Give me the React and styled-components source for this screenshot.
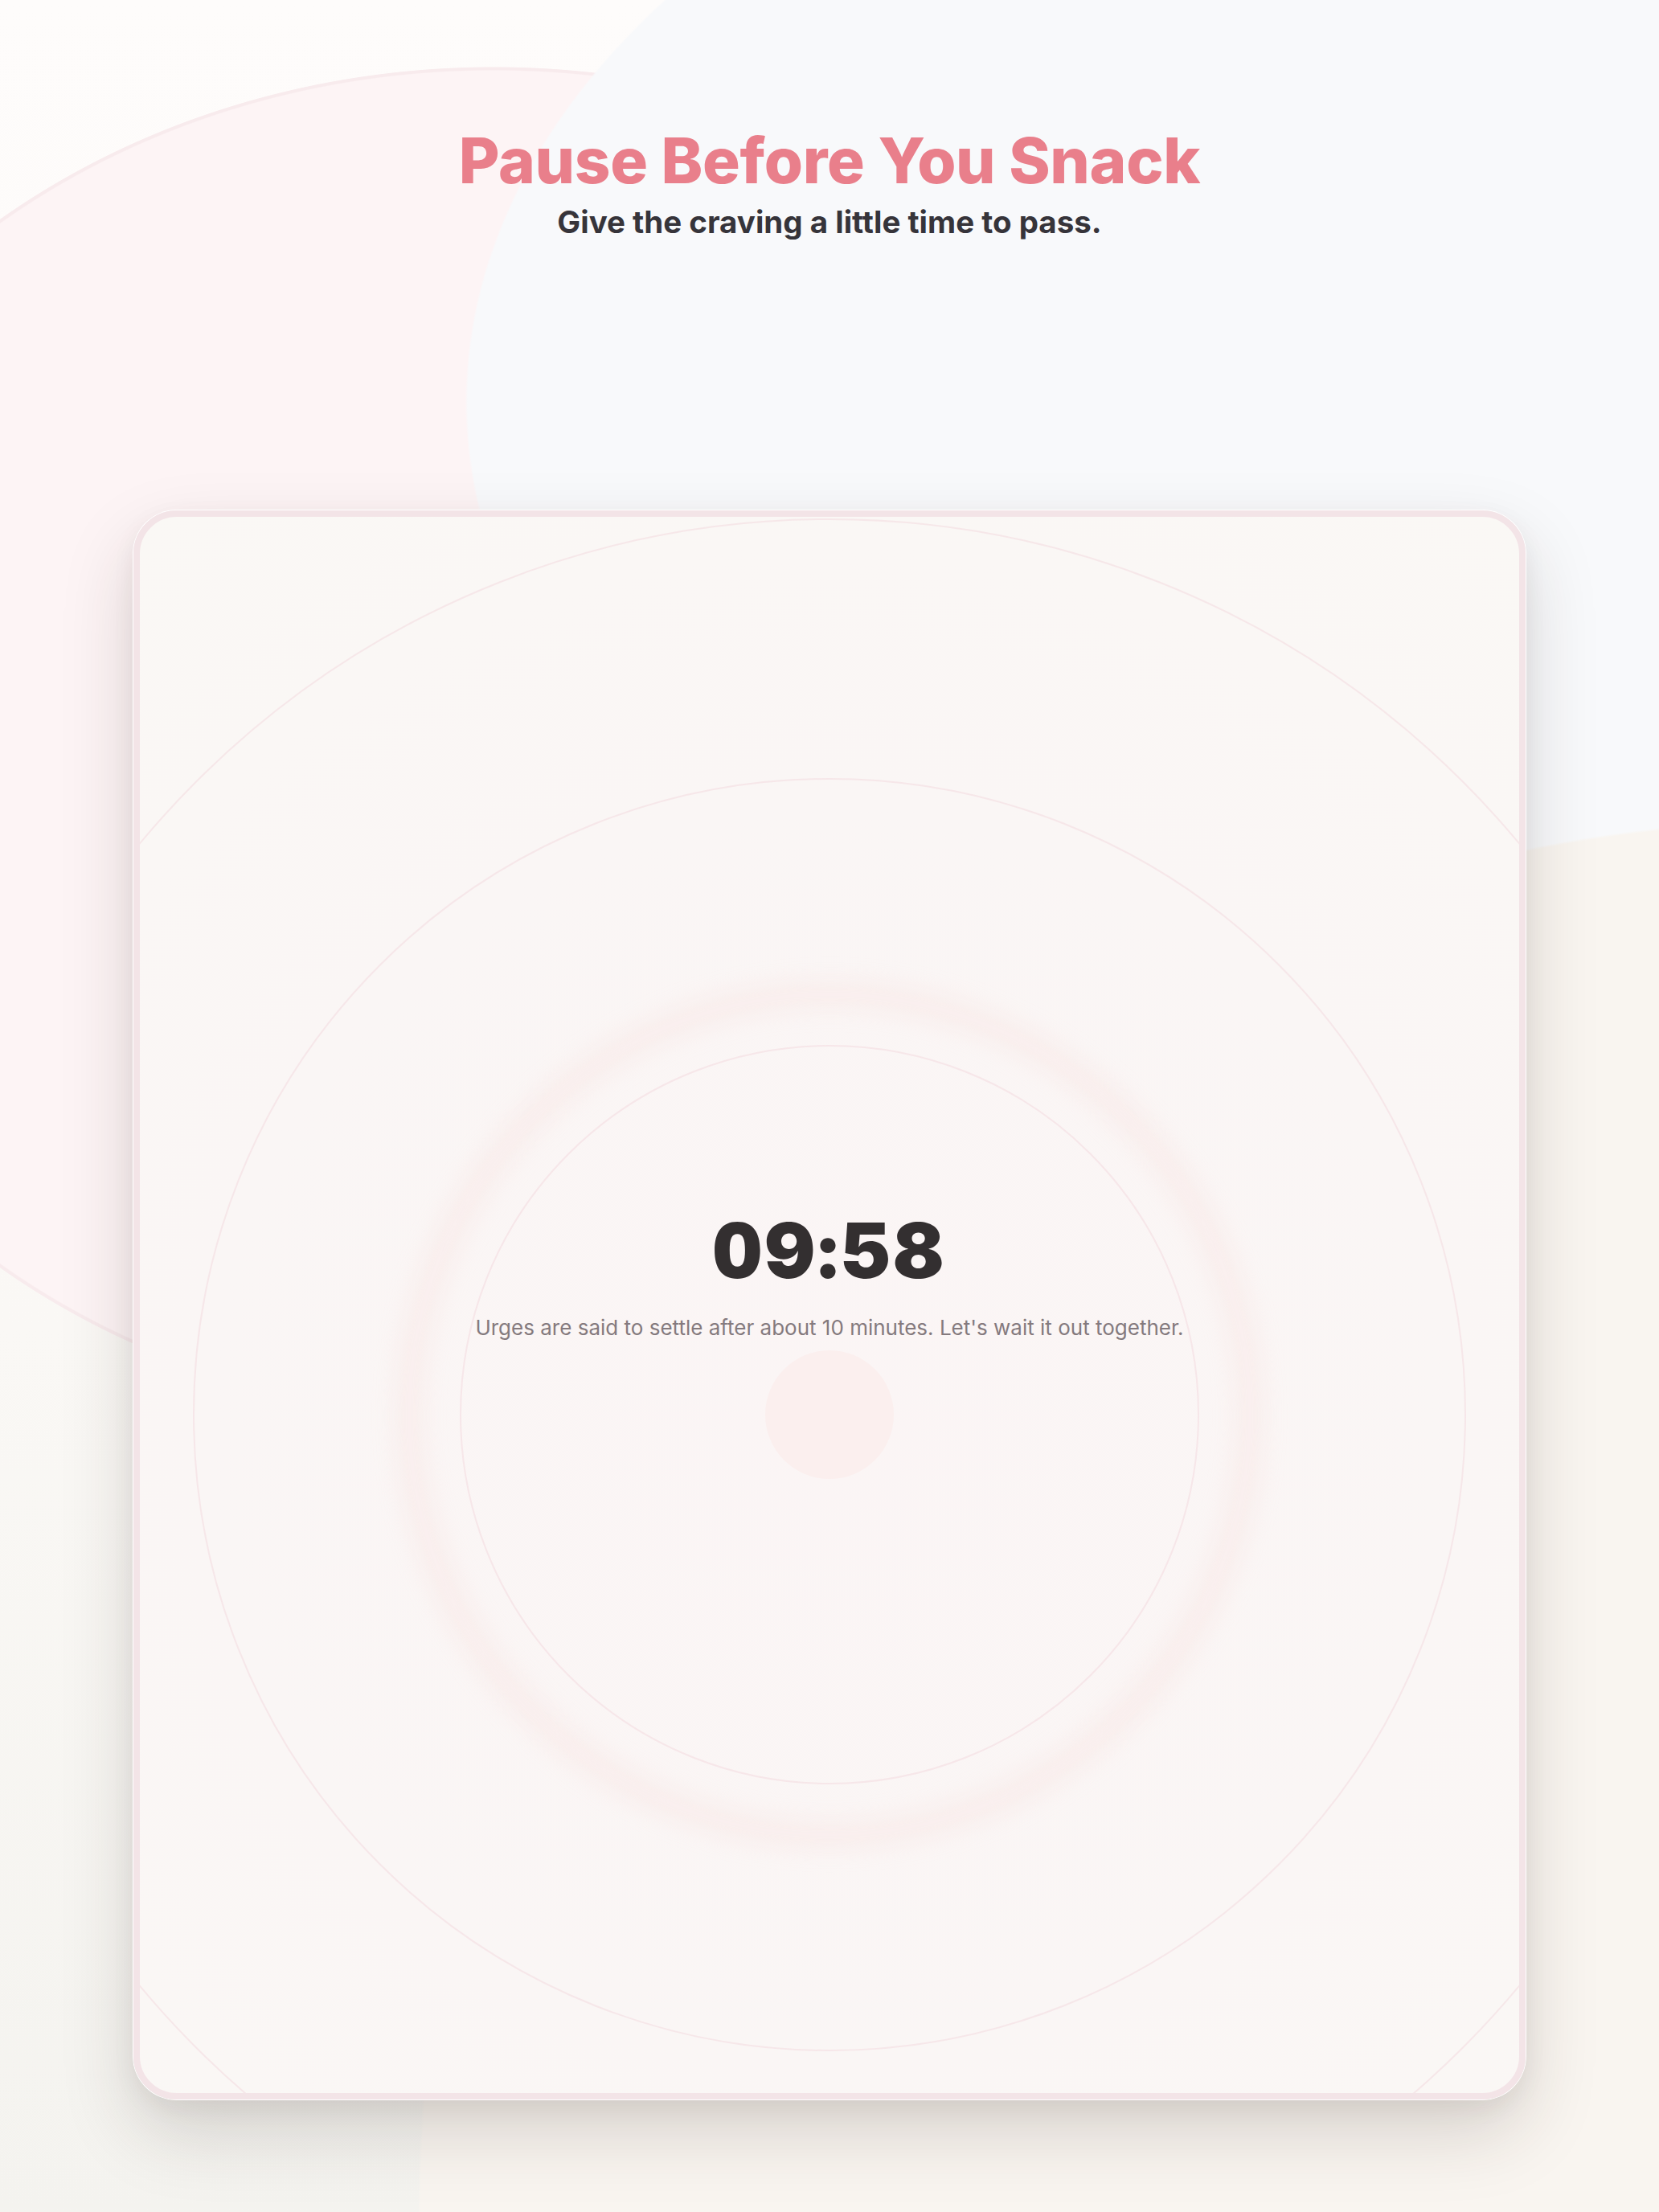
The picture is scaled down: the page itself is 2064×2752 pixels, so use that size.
import React from 'react';
import styled, { createGlobalStyle } from 'styled-components';

const GlobalStyle = createGlobalStyle`
  html, body {
    margin: 0;
    padding: 0;
  }

  body {
    font-family: Inter, "Noto Sans", "Liberation Sans", sans-serif;
    -webkit-font-smoothing: antialiased;
  }

  * {
    box-sizing: border-box;
  }
`;

const Page = styled.main`
  min-height: 2752px;
  display: flex;
  flex-direction: column;
  align-items: center;
  overflow: hidden;
  background:
    radial-gradient(circle 1730px at 2250px 2750px, #f9f5f0 99.8%, transparent 100%),
    radial-gradient(1400px 882px at 1979px 500px, #f8f9fb 99.8%, transparent 100%),
    radial-gradient(972px 842px at 614px 925px, #fdf4f5 99.4%, #f8ebed 99.55%, #f8ebed 99.9%, transparent 100%),
    linear-gradient(180deg, #fefcfb 0%, #faf8f5 60%, #f4f3ef 100%);
`;

const Header = styled.header`
  padding-top: 157px;
  display: flex;
  flex-direction: column;
  align-items: center;
  text-align: center;
`;

const Title = styled.h1`
  margin: 0;
  font-size: 78px;
  line-height: 1.1;
  font-weight: 800;
  letter-spacing: -0.3px;
  color: #e97f8b;
`;

const Subtitle = styled.p`
  margin: 9px 0 0;
  font-size: 38.5px;
  line-height: 48px;
  font-weight: 700;
  letter-spacing: 0;
  color: #36343a;
`;

const Card = styled.section`
  margin-top: 335px;
  width: 1732px;
  height: 1977px;
  border: 8px solid #f3e4e7;
  border-radius: 54px;
  background: radial-gradient(circle at 50% 58%, #fbf5f5 0%, #faf6f5 55%, #faf8f5 100%);
  box-shadow:
    0 0 0 1px #ffffff,
    0 40px 90px rgba(50, 35, 30, 0.17),
    0 10px 30px rgba(50, 35, 30, 0.06);
  overflow: hidden;
  isolation: isolate;
  display: flex;
  flex-direction: column;
  align-items: center;
  padding-top: 861px;
`;

const Timer = styled.div`
  font-size: 95px;
  line-height: 1.1;
  font-weight: 900;
  letter-spacing: 4px;
  color: #332f30;
  font-variant-numeric: tabular-nums;
`;

const Message = styled.p`
  margin: 26px 0 0;
  font-size: 26px;
  line-height: 35px;
  font-weight: 400;
  color: #847a7e;
`;

const Orb = styled.div`
  position: relative;
  margin-top: 11px;
  width: 160px;
  height: 160px;
  border-radius: 50%;
  background: #fbefee;
`;

const Ring = styled.span`
  position: absolute;
  left: 50%;
  top: 50%;
  z-index: -1;
  width: ${p => p.$size}px;
  height: ${p => p.$size}px;
  transform: translate(-50%, -50%);
  border-radius: 50%;
  border: 2px solid rgba(240, 196, 204, 0.3);
  pointer-events: none;
`;

const Glow = styled.span`
  position: absolute;
  left: 50%;
  top: 50%;
  z-index: -1;
  width: 1080px;
  height: 1080px;
  transform: translate(-50%, -50%);
  border-radius: 50%;
  border: 34px solid rgba(248, 212, 210, 0.24);
  filter: blur(14px);
  pointer-events: none;
`;

const rings = [920, 1584, 2230];

const App = () => (
  <Page>
    <GlobalStyle />
    <Header>
      <Title>Pause Before You Snack</Title>
      <Subtitle>Give the craving a little time to pass.</Subtitle>
    </Header>
    <Card>
      <Timer>09:58</Timer>
      <Message>Urges are said to settle after about 10 minutes. Let's wait it out together.</Message>
      <Orb>
        <Glow />
        {rings.map(size => (
          <Ring key={size} $size={size} />
        ))}
      </Orb>
    </Card>
  </Page>
);

export default App;
